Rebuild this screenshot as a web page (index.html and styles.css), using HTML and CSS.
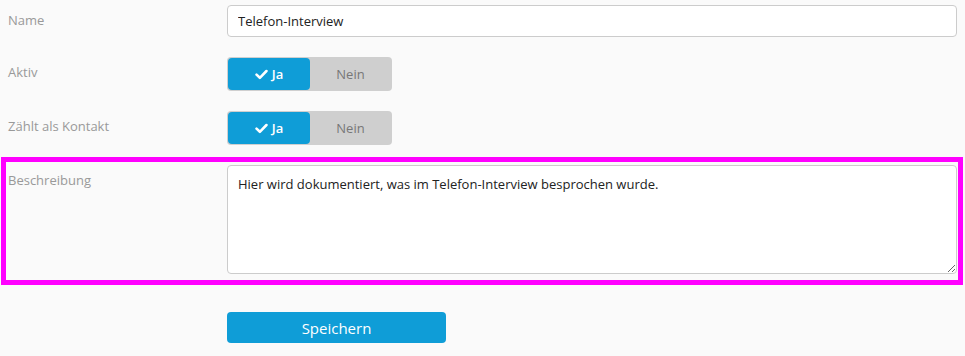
FILE: index.html
```html
<!DOCTYPE html>
<html lang="de">
<head>
<meta charset="utf-8">
<title>Kontaktart</title>
<link rel="stylesheet" href="styles.css">
</head>
<body>
<form class="form">
  <div class="row">
    <label class="label">Name</label>
    <div class="control"><input class="input" type="text" value="Telefon-Interview"></div>
  </div>
  <div class="row">
    <label class="label">Aktiv</label>
    <div class="control">
      <div class="toggle">
        <span class="opt on"><svg class="check" viewBox="0 0 14 12" width="13" height="11"><path d="M1.6 6.2 L5.2 9.6 L12.4 2.2" fill="none" stroke="#fff" stroke-width="2.8" stroke-linecap="round" stroke-linejoin="round"/></svg>Ja</span>
        <span class="opt off">Nein</span>
      </div>
    </div>
  </div>
  <div class="row">
    <label class="label">Zählt als Kontakt</label>
    <div class="control">
      <div class="toggle">
        <span class="opt on"><svg class="check" viewBox="0 0 14 12" width="13" height="11"><path d="M1.6 6.2 L5.2 9.6 L12.4 2.2" fill="none" stroke="#fff" stroke-width="2.8" stroke-linecap="round" stroke-linejoin="round"/></svg>Ja</span>
        <span class="opt off">Nein</span>
      </div>
    </div>
  </div>
  <div class="highlight">
    <div class="row">
      <label class="label">Beschreibung</label>
      <div class="control"><textarea class="textarea">Hier wird dokumentiert, was im Telefon-Interview besprochen wurde.</textarea></div>
    </div>
  </div>
  <div class="actions">
    <button type="button" class="save">Speichern</button>
  </div>
</form>
</body>
</html>
```

FILE: styles.css
```css
html, body {
  margin: 0;
  padding: 0;
  background: #fafafa;
}
body {
  font-family: "Open Sans", "DejaVu Sans", sans-serif;
  font-size: 13px;
  color: #333;
}
.form {
  display: flex;
  flex-direction: column;
  gap: 20px;
  padding: 5px 8px 0 8px;
}
.row {
  display: flex;
  align-items: flex-start;
}
.label {
  width: 219px;
  flex: none;
  color: #999;
  font-size: 13px;
  line-height: 18px;
  padding-top: 6px;
}
.control {
  flex: 1;
  min-width: 0;
}
.input {
  box-sizing: border-box;
  display: block;
  width: 100%;
  height: 32px;
  border: 1px solid #ccc;
  border-radius: 4px;
  background: #fff;
  padding: 0 10px;
  font-family: inherit;
  font-size: 13px;
  color: #222;
}
.toggle {
  display: flex;
  width: 165px;
  height: 34px;
  box-sizing: border-box;
  padding: 1px;
  background: #cfcfcf;
  border-radius: 4px;
}
.opt {
  flex: 1;
  display: flex;
  align-items: center;
  justify-content: center;
  font-size: 13px;
  border-radius: 4px;
}
.opt.on {
  background: #0f9dd7;
  color: #fff;
  font-weight: 600;
  flex: 0 0 82px;
}
.opt.off {
  color: #777;
}
.check {
  margin-right: 4px;
}
.highlight {
  margin: -8px -6px 0 -7px;
  border: 5px solid #ff00ff;
  padding: 3px 1px 6px 2px;
}
.textarea {
  box-sizing: border-box;
  display: block;
  width: 100%;
  height: 109px;
  border: 1px solid #ccc;
  border-radius: 4px;
  background: #fff;
  padding: 9px 10px;
  font-family: inherit;
  font-size: 13px;
  line-height: 18px;
  color: #222;
  resize: vertical;
}
.actions {
  margin-top: 7px;
  padding-left: 219px;
}
.save {
  width: 219px;
  height: 31px;
  border: none;
  border-radius: 4px;
  background: #0f9dd7;
  color: #fff;
  font-family: inherit;
  font-size: 15px;
  cursor: pointer;
}
```
